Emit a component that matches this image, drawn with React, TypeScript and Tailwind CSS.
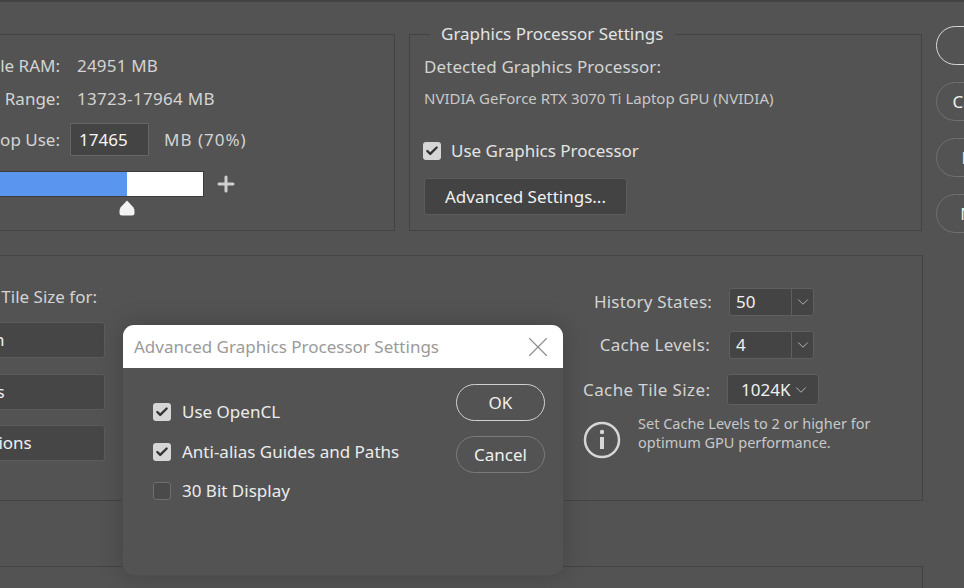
import { Check, ChevronDown, X, Plus } from "lucide-react";

const font = "font-['Noto_Sans',sans-serif]";

function Checkbox({ checked }: { checked: boolean }) {
  return checked ? (
    <span className="flex h-[18px] w-[18px] shrink-0 items-center justify-center rounded-[3px] bg-[#d6d6d6]">
      <Check size={14} strokeWidth={4} className="text-[#333333]" />
    </span>
  ) : (
    <span className="h-[18px] w-[18px] shrink-0 rounded-[3px] border border-[#6e6e6e] bg-[#4a4a4a]" />
  );
}

function Combo({ value }: { value: string }) {
  return (
    <div className="flex h-[28px] w-[85px] rounded-[3px] border border-[#5f5f5f] bg-[#444444] text-[#f0f0f0]">
      <span className="flex-1 border-r border-[#5f5f5f] pl-[6px] leading-[26px]">{value}</span>
      <span className="flex w-[21px] items-center justify-center">
        <ChevronDown size={18} strokeWidth={1.1} className="text-[#c8c8c8]" />
      </span>
    </div>
  );
}

function SideButton({ label, strong }: { label: string; strong?: boolean }) {
  return (
    <div
      className={
        strong
          ? "flex h-[39px] w-[86px] items-center justify-center rounded-[20px] border border-[#d8d8d8] text-[#f0f0f0]"
          : "flex h-[39px] w-[86px] items-center justify-center rounded-[20px] border border-[#707070] text-[#f0f0f0]"
      }
    >
      {label}
    </div>
  );
}

function PresetRow({ label }: { label: string }) {
  return (
    <div className="flex h-[36px] w-[330px] items-center justify-center rounded-[3px] border border-[#5c5c5c] bg-[#464646] text-[#f0f0f0]">
      {label}
    </div>
  );
}

// label column is right aligned, the window edge cuts off the start of the text
function MemLabel({ text }: { text: string }) {
  return <div className="flex w-[60px] shrink-0 justify-end whitespace-nowrap">{text}</div>;
}

export default function App() {
  return (
    <div className={`relative h-[588px] w-[964px] overflow-hidden border-t-2 border-[#434343] bg-[#535353] text-[17px] leading-[24px] text-[#d4d4d4] ${font}`}>
      <div className="flex pt-[24px]">
        {/* Memory panel */}
        <div className="mt-[8px] h-[197px] w-[395px] shrink-0 border-y border-r border-[#434343]">
          <div className="flex items-center pt-[19px]">
            <MemLabel text="Available RAM:" />
            <span className="ml-[17px] tracking-[0.2px]">24951 MB</span>
          </div>
          <div className="mt-[9px] flex items-center">
            <MemLabel text="Ideal Range:" />
            <span className="ml-[17px] tracking-[0.3px]">13723-17964 MB</span>
          </div>
          <div className="mt-[12px] flex items-center">
            <MemLabel text="Let Photoshop Use:" />
            <span className="ml-[10px] h-[33px] w-[79px] border border-[#666666] bg-[#444444] pl-[8px] leading-[32px] text-[#f5f5f5]">17465</span>
            <span className="ml-[15px] tracking-[1px]">MB (70%)</span>
          </div>
          <div className="-ml-[20px] mt-[15px] flex items-center">
            <div className="flex h-[26px] w-[224px] border border-[#3c3c3c] bg-white">
              <div className="w-[146px] bg-[#5a96f0]" />
            </div>
            <Plus size={24} strokeWidth={3} className="ml-[10px] text-[#cfcfcf]" />
          </div>
          <svg width="16" height="16" viewBox="0 0 16 16" className="ml-[119px] mt-[3px]">
            <path d="M8 0.5 L14.5 7.5 Q15.5 9 15.5 11 V13 Q15.5 15.5 13 15.5 H3 Q0.5 15.5 0.5 13 V11 Q0.5 9 1.5 7.5 Z" fill="#f2f2f2" />
          </svg>
        </div>

        {/* Graphics processor panel */}
        <div className="relative ml-[14px] mt-[8px] h-[197px] w-[513px] shrink-0 border border-[#434343] px-[14px]">
          <span className="absolute left-[20px] top-[-12px] bg-[#535353] pl-[11px] pr-[12px] leading-[22px] text-[#e4e4e4]">Graphics Processor Settings</span>
          <div className="pt-[20px] tracking-[0.1px]">Detected Graphics Processor:</div>
          <div className="mt-[8px] text-[15px] leading-[22px] text-[#c8c8c8]">NVIDIA GeForce RTX 3070 Ti Laptop GPU (NVIDIA)</div>
          <div className="-ml-px mt-[30px] flex items-center gap-[10px] text-[#e4e4e4]">
            <Checkbox checked />
            <span>Use Graphics Processor</span>
          </div>
          <div className="mt-[15px] flex h-[37px] w-[203px] items-center justify-center rounded-[3px] border border-[#5c5c5c] bg-[#434343] text-[#f0f0f0]">Advanced Settings...</div>
        </div>

        {/* OK / Cancel column */}
        <div className="ml-[14px] flex shrink-0 flex-col gap-[17px]">
          <SideButton label="OK" strong />
          <SideButton label="Cancel" />
          <SideButton label="Prev" />
          <SideButton label="Next" />
        </div>
      </div>

      {/* History and cache panel */}
      <div className="mt-[22px] flex h-[246px] w-[923px] justify-between border-y border-r border-[#434343]">
        <div className="-ml-[225px] w-[330px] shrink-0 pt-[29px]">
          <div className="flex justify-end whitespace-nowrap pr-[8px]">Optimize Cache Levels and Tile Size for:</div>
          <div className="mt-[13px] flex flex-col gap-[15.5px]">
            <PresetRow label="Web / UI Design" />
            <PresetRow label="Default / Photos" />
            <PresetRow label="Huge Pixel Dimensions" />
          </div>
        </div>
        <div className="w-[339px] pt-[32px]">
          <div className="flex flex-col gap-[15px]">
            <div className="flex items-center justify-end pr-[108px]"><span className="mr-[17px] tracking-[0.2px]">History States:</span><Combo value="50" /></div>
            <div className="flex items-center justify-end pr-[108px]"><span className="mr-[19px] tracking-[0.3px]">Cache Levels:</span><Combo value="4" /></div>
          </div>
          <div className="mt-[15px] flex items-center">
            <span className="w-[127px] whitespace-nowrap text-right tracking-[0.4px]">Cache Tile Size:</span>
            <div className="ml-[17px] flex h-[31px] w-[92px] items-center rounded-[3px] border border-[#5f5f5f] bg-[#444444] pl-[13px] text-[#f0f0f0]">
              1024K
              <ChevronDown size={18} strokeWidth={1.1} className="ml-[2px] text-[#c8c8c8]" />
            </div>
          </div>
          <div className="mt-[9px] flex items-start">
            <svg width="38" height="38" viewBox="0 0 38 38" className="mt-[7px] shrink-0">
              <circle cx="19" cy="19" r="17" fill="none" stroke="#d6d6d6" strokeWidth="2.5" />
              <circle cx="19" cy="11" r="2.2" fill="#d6d6d6" />
              <rect x="17" y="16" width="4" height="12" fill="#d6d6d6" />
            </svg>
            <p className="ml-[17px] whitespace-nowrap text-[14.5px] leading-[19px] text-[#c8c8c8]">Set Cache Levels to 2 or higher for<br />optimum GPU performance.</p>
          </div>
        </div>
      </div>

      {/* Next panel, only its top edge shows */}
      <div className="mt-[65px] h-[40px] w-[923px] border-r border-t border-[#434343]" />

      {/* Advanced Graphics Processor Settings dialog */}
      <div className="absolute left-[122px] top-[322px] h-[252px] w-[442px] rounded-[12px] border border-[#4c4c4c] bg-[#535353] shadow-[0_0_24px_rgba(0,0,0,0.18)]">
        <div className="flex h-[43px] items-center justify-between rounded-t-[11px] bg-white pl-[11px] pr-[8px]">
          <span className="text-[#9a9a9a]">Advanced Graphics Processor Settings</span>
          <X size={34} strokeWidth={0.8} className="text-[#8c8c8c]" />
        </div>
        <div className="flex justify-between pl-[30px] pr-[18px]">
          <div className="flex flex-col gap-[19.5px] pt-[34px] text-[#ececec]">
            <div className="flex h-[20px] items-center gap-[11px]"><Checkbox checked /><span>Use OpenCL</span></div>
            <div className="flex h-[20px] items-center gap-[11px]"><Checkbox checked /><span>Anti-alias Guides and Paths</span></div>
            <div className="flex h-[20px] items-center gap-[11px]"><Checkbox checked={false} /><span>30 Bit Display</span></div>
          </div>
          <div className="flex flex-col gap-[15px] pt-[16px] text-[#f0f0f0]">
            <div className="flex h-[37px] w-[89px] items-center justify-center rounded-[19px] border border-[#d0d0d0]">OK</div>
            <div className="flex h-[37px] w-[89px] items-center justify-center rounded-[19px] border border-[#7a7a7a]">Cancel</div>
          </div>
        </div>
      </div>
    </div>
  );
}
